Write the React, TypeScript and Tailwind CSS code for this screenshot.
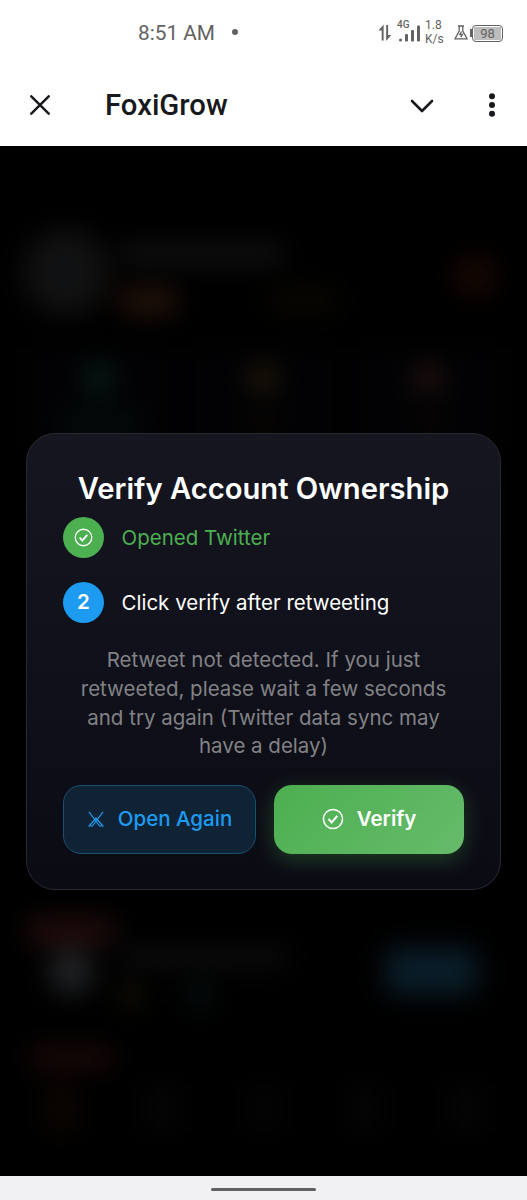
import type { ReactNode } from 'react';

const STATS = [
  { icon: 'bg-[#08201b]', value: 'w-[76px] bg-[#020c0a]' },
  { icon: 'bg-[#241a0a]', value: 'w-[24px] bg-[#0a0702]' },
  { icon: 'bg-[#24130f]', value: 'w-[24px] bg-[#090504]' },
];

const TABS = ['bg-[#0d0602]', 'bg-[#050505]', 'bg-[#040406]', 'bg-[#050507]', 'bg-[#050507]'];

function StatusBar() {
  return (
    <div className="flex h-[66px] items-center pl-[138px] pr-[24px] text-[#626262]">
      <span className="w-[78px] whitespace-nowrap pt-[2px] text-[20.8px]">8:51 AM</span>
      <span className="ml-[16px] mt-[-2px] h-[6px] w-[6px] rounded-full bg-[#626262]" />
      <div className="ml-auto flex items-center">
        {/* data arrows */}
        <svg width="14" height="18" viewBox="0 0 14 18" fill="currentColor">
          <path d="M5.600 0.500V16.500H3.700V6.500H0.500ZM8.200 1H10.100V11H13.200L8.200 17Z" />
        </svg>
        <div className="relative ml-[7px] h-[24px] w-[23px]">
          <span className="absolute left-[-2px] top-[-2px] text-[10px] font-medium leading-[12px]">4G</span>
          <svg width="23" height="24" viewBox="0 0 23 24" fill="currentColor">
            <rect x="0" y="17.500" width="3" height="3" rx="1.500" />
            <rect x="6" y="13" width="3" height="7.500" rx="1" />
            <rect x="12" y="9" width="3" height="11.500" rx="1" />
            <rect x="18" y="4.500" width="3" height="16" rx="1" />
          </svg>
        </div>
        <div className="ml-[3px] mt-[-2px] w-[20px] whitespace-nowrap text-[12px] leading-[14px]">
          <div>1.8</div>
          <div>K/s</div>
        </div>
        <svg className="ml-[9px] mt-[-2px]" width="14" height="15" viewBox="0 0 14 15" fill="none" stroke="currentColor" strokeWidth="1.300">
          <path d="M4 1h6M5.200 1v5L1 13.800h12L8.800 6V1M7.600 6.500L5.800 9.500h2.600L6.800 12.200" />
        </svg>
        <span className="ml-[2px] h-[8px] w-[2px] bg-[#626262]" />
        <div className="flex h-[17px] w-[31px] rounded-[4px] border border-[#626262] p-px">
          <span className="flex flex-1 items-center justify-center rounded-[1px] bg-[#bdbdbd] text-[13px] leading-none">98</span>
        </div>
      </div>
    </div>
  );
}

function AppBar() {
  return (
    <div className="flex h-[80px] items-center pb-[2px] pl-[30px] text-[#17191c]">
      <svg className="shrink-0" width="20" height="20" viewBox="0 0 20 20" fill="none" stroke="currentColor" strokeWidth="2.500" strokeLinecap="round">
        <path d="M1.300 1.300l17.400 17.400M18.700 1.300L1.300 18.700" />
      </svg>
      <h1 className="ml-[55px] pt-[2px] text-[29.3px] font-medium leading-none">FoxiGrow</h1>
      <svg className="ml-auto mt-[2px]" width="24" height="14" viewBox="0 0 24 14" fill="none" stroke="currentColor" strokeWidth="2.600" strokeLinecap="round" strokeLinejoin="round">
        <path d="M2 2l10 10L22 2" />
      </svg>
      <svg className="ml-[55px] mr-[32px]" width="6" height="24" viewBox="0 0 6 24" fill="currentColor">
        <circle cx="3" cy="3.200" r="3" />
        <circle cx="3" cy="12" r="3" />
        <circle cx="3" cy="20.800" r="3" />
      </svg>
    </div>
  );
}

/* dimmed page behind the dialog */
function BlurredPage() {
  return (
    <div className="flex h-full flex-col bg-black blur-[13px]">
      <div className="flex items-start pl-[22px] pr-[30px] pt-[82px]">
        <div className="h-[88px] w-[88px] rounded-full border-4 border-[#150d06] bg-[#101112]" />
        <div className="ml-[12px] mt-[17px] flex-1">
          <div className="h-[18px] w-[160px] bg-[#131313]" />
          <div className="mt-[26px] flex">
            <div className="h-[24px] w-[54px] bg-[#27140b]" />
            <div className="ml-[94px] h-[22px] w-[66px] bg-[#0b0902]" />
          </div>
        </div>
        <div className="mt-[26px] h-[44px] w-[44px] rounded-full bg-[#160703]" />
      </div>
      <div className="mt-[32px] flex gap-[14px] px-[24px]">
        {STATS.map((stat) => (
          <div key={stat.icon} className="flex h-[100px] flex-1 flex-col items-center bg-[#020204] pt-[16px]">
            <div className={`h-[28px] w-[28px] rounded-full ${stat.icon}`} />
            <div className={`mt-[20px] h-[24px] ${stat.value}`} />
          </div>
        ))}
      </div>
      <div className="mt-auto h-[124px] px-[28px]">
        <div className="h-[26px] w-[86px] bg-[#230c0c]" />
        <div className="flex pl-[20px] pt-[4px]">
          <div className="h-[46px] w-[46px] rounded-full bg-[#1f2123]" />
          <div className="ml-[26px] flex-1">
            <div className="h-[18px] w-[166px] bg-[#0d0d0f]" />
            <div className="mt-[18px] flex gap-[46px]">
              <div className="h-[22px] w-[22px] bg-[#131106]" />
              <div className="h-[22px] w-[22px] bg-[#081312]" />
            </div>
          </div>
          <div className="mr-[22px] h-[46px] w-[92px] rounded-[10px] bg-[#0a1d29]" />
        </div>
      </div>
      <div className="ml-[30px] mt-[4px] h-[22px] w-[82px] bg-[#1b0808]" />
      <div className="mb-[44px] mt-[16px] flex justify-between px-[46px]">
        {TABS.map((color, i) => (
          <div key={i} className={`h-[48px] w-[30px] ${color}`} />
        ))}
      </div>
    </div>
  );
}

function CheckIcon({ size }: { size: number }) {
  return (
    <svg width={size} height={size} viewBox="0 0 20 20" fill="none" stroke="currentColor">
      <circle cx="10" cy="10" r="8.700" strokeWidth="1.400" />
      <path d="M5.900 10l2.900 3.200 5.100-6" strokeWidth="1.900" />
    </svg>
  );
}

function XIcon() {
  return (
    <svg width="18" height="18" viewBox="0 0 18 18" fill="none" stroke="currentColor" strokeWidth="1.200">
      <path d="M2 1.800L12.500 16H15.800L8.500 7.500M16 1.800L5.500 16H2.200L9.500 7.500" />
    </svg>
  );
}

function Step({ badge, color, children }: { badge: ReactNode; color: string; children: ReactNode }) {
  return (
    <div className="flex items-center gap-[17.500px]">
      <span className={`flex h-[41px] w-[41px] items-center justify-center rounded-full text-[20.5px] font-semibold text-white ${color}`}>
        {badge}
      </span>
      {children}
    </div>
  );
}

function VerifyDialog() {
  return (
    <div className="w-[475px] rounded-[29px] border border-[#282830] bg-linear-to-b from-[#151620] to-[#0b0b14] px-[36px] pb-[35px] pt-[35px] font-['Inter',sans-serif]">
      <h2 className="whitespace-nowrap pt-px text-center text-[29.2px] font-semibold leading-[38px] text-white">Verify Account Ownership</h2>
      <div className="mt-[9px] flex flex-col gap-[24px] text-[20.5px]">
        <Step color="bg-[#4caf50]" badge={<CheckIcon size={19} />}>
          <span className="pt-[2px] text-[#4caf50]">Opened Twitter</span>
        </Step>
        <Step color="bg-[#1d9bf0]" badge="2">
          <span className="pt-[2px] text-white">Click verify after retweeting</span>
        </Step>
      </div>
      <p className="mt-[23px] text-center text-[20.5px] leading-[28.7px] text-[#828286]">
        Retweet not detected. If you just
        <br />
        retweeted, please wait a few seconds
        <br />
        and try again (Twitter data sync may
        <br />
        have a delay)
      </p>
      <div className="mt-[24px] flex gap-[18px] text-[20.5px]">
        <button className="flex h-[69px] w-[193px] items-center justify-center gap-[13px] whitespace-nowrap rounded-[18px] border border-[#1b4e70] bg-[#0f2335] font-medium text-[#1d9bf0]">
          <XIcon />
          Open Again
        </button>
        <button className="flex h-[69px] flex-1 items-center justify-center gap-[13px] rounded-[18px] bg-linear-135 from-[#4caf50] to-[#66bb6a] font-semibold text-white shadow-[0_6px_22px_rgba(76,175,80,0.3)]">
          <CheckIcon size={22} />
          Verify
        </button>
      </div>
    </div>
  );
}

export default function App() {
  return (
    <div className="flex h-[1200px] w-[527px] flex-col overflow-hidden bg-white font-['Roboto',sans-serif]">
      <StatusBar />
      <AppBar />
      <main className="relative h-[1030px] overflow-hidden bg-black">
        <BlurredPage />
        <div className="absolute inset-0 flex items-center justify-center pt-px">
          <VerifyDialog />
        </div>
      </main>
      <footer className="flex h-[24px] justify-center bg-[#f0eff1] pt-[12px]">
        <div className="h-[3px] w-[105px] rounded-full bg-[#606060]" />
      </footer>
    </div>
  );
}
